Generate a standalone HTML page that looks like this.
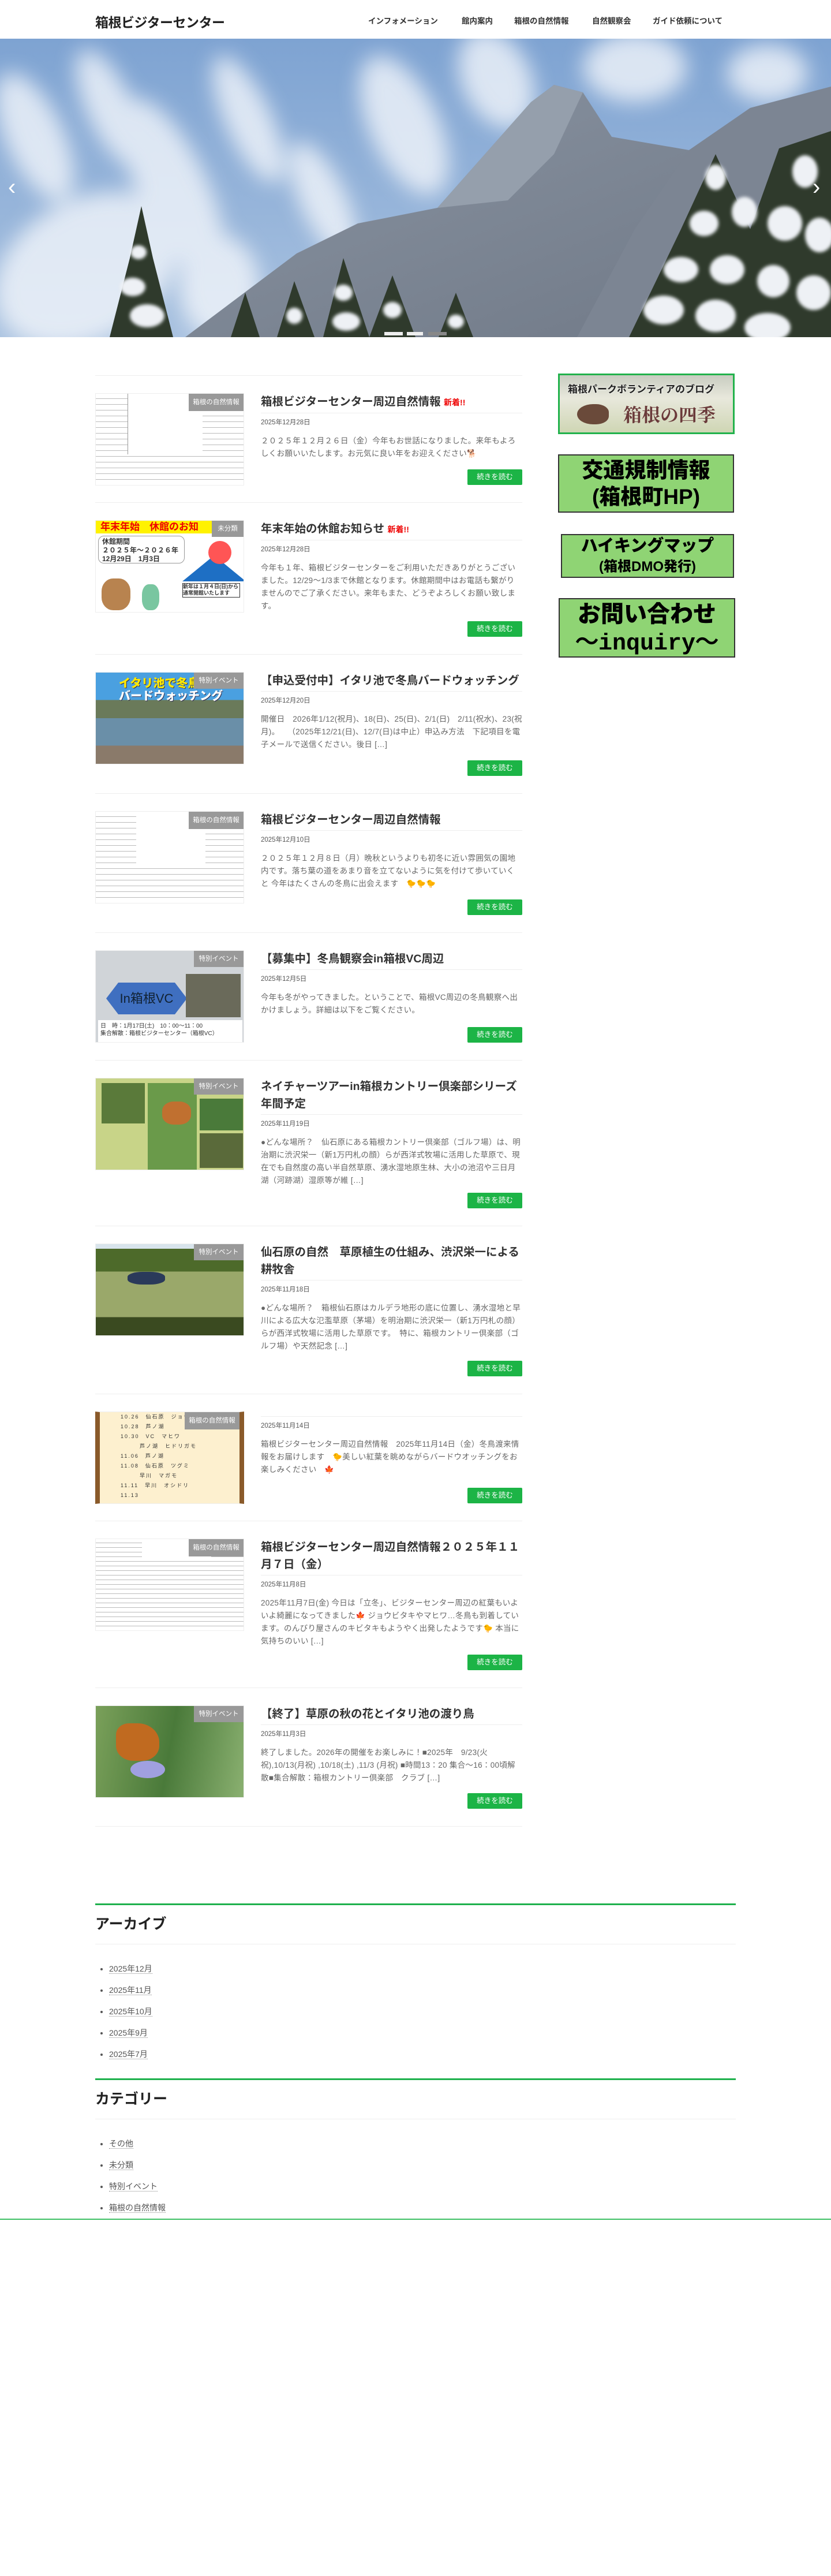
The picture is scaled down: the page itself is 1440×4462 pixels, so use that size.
<!DOCTYPE html>
<html lang="ja"><head><meta charset="utf-8">
<style>
*{box-sizing:border-box;margin:0;padding:0}
body{width:1440px;height:4462px;background:#fff;font-family:"Liberation Sans","Noto Sans CJK JP",sans-serif;color:#333;position:relative;overflow:hidden}
.hdr{position:absolute;left:0;top:0;width:1440px;height:67px;background:#fff}
.logo{position:absolute;left:165px;top:20px;font-size:23px;font-weight:bold;color:#222;letter-spacing:-0.5px}
.nav{position:absolute;top:25px;font-size:13.5px;font-weight:bold;color:#333;white-space:nowrap}
.hero{position:absolute;left:0;top:67px;width:1440px;height:517px;overflow:hidden}
.main{position:absolute;left:165px;top:650px;width:740px}
.post{position:relative;border-top:1px solid #eee;padding-top:30px}
.thumb{position:absolute;left:0;top:30px;width:258px;height:160px;overflow:hidden;border:1px solid #eee}
.lbl{position:absolute;right:0;top:0;width:86px;height:28px;background:#999;color:#fff;font-size:11.5px;line-height:28px;text-align:center}
.txt{margin-left:287px}
.tt{font-size:19.5px;font-weight:bold;line-height:30px;padding-bottom:3px;border-bottom:1px solid #eee;color:#333}
.tt .new{color:#e00;font-size:14px}
.dt{font-size:11.5px;color:#555;line-height:16px;margin-top:8px}
.ex{font-size:13.5px;line-height:22px;color:#666;margin-top:13px;letter-spacing:0.3px}
.btn{position:absolute;right:0;bottom:30px;width:95px;height:27px;background:#1cb446;color:#fff;font-size:12.5px;line-height:27px;text-align:center;border-radius:2px}
.side a{position:absolute;display:block}
.bn{background:#8fd474;border:2px solid #333;color:#000;font-weight:900;text-align:center}
.foot{position:absolute;left:165px;width:1110px}
.wg{border-top:3px solid #1fb14c;}
.wg h2{font-size:25px;font-weight:bold;color:#222;height:68px;line-height:66px;border-bottom:1px solid #eee}
.wg ul{list-style:disc;padding-left:24px;padding-top:24px;color:#333}
.wg li{font-size:14px;line-height:37px;color:#555}
.wg li span{border-bottom:1px dotted #888}
</style></head><body>
<div class="hdr">
<div class="logo">箱根ビジターセンター</div>
<div class="nav" style="left:638px">インフォメーション</div>
<div class="nav" style="left:800px">館内案内</div>
<div class="nav" style="left:891px">箱根の自然情報</div>
<div class="nav" style="left:1026px">自然観察会</div>
<div class="nav" style="left:1131px">ガイド依頼について</div>
</div>

<div class="hero">
<svg width="1440" height="517" viewBox="0 0 1440 517">
<defs>
<linearGradient id="sky" x1="0" y1="0" x2="0" y2="1"><stop offset="0" stop-color="#7ea3d2"/><stop offset="1" stop-color="#a9c2e0"/></linearGradient>
<filter id="bl"><feGaussianBlur stdDeviation="18"/></filter>
<filter id="bl2"><feGaussianBlur stdDeviation="3"/></filter>
<linearGradient id="mt" x1="0" y1="0" x2="1" y2="1"><stop offset="0" stop-color="#8a94a2"/><stop offset="1" stop-color="#6f7886"/></linearGradient>
</defs>
<rect width="1440" height="517" fill="url(#sky)"/>
<g filter="url(#bl)" fill="#f2f5fa" opacity="0.8">
<ellipse cx="150" cy="400" rx="170" ry="120" transform="rotate(-30 150 400)"/>
<ellipse cx="300" cy="260" rx="60" ry="170" transform="rotate(-25 300 260)"/>
<ellipse cx="60" cy="170" rx="50" ry="120" transform="rotate(-25 60 170)"/>
<ellipse cx="190" cy="120" rx="40" ry="110" transform="rotate(-25 190 120)"/>
<ellipse cx="430" cy="140" rx="40" ry="120" transform="rotate(-25 430 140)"/>
<ellipse cx="700" cy="150" rx="60" ry="130" transform="rotate(-25 700 150)"/>
<ellipse cx="860" cy="70" rx="60" ry="90" transform="rotate(-25 860 70)"/>
<ellipse cx="1100" cy="50" rx="90" ry="60"/>
<ellipse cx="1330" cy="60" rx="70" ry="50"/>
<ellipse cx="560" cy="280" rx="40" ry="110" transform="rotate(-25 560 280)"/>
<ellipse cx="380" cy="430" rx="70" ry="90"/>
</g>
<polygon points="321,517 514,372 620,320 758,293 920,110 960,80 1010,93 1060,170 1194,193 1300,120 1440,83 1440,517" fill="url(#mt)"/>
<polygon points="1194,193 1300,120 1440,83 1440,517 1000,517 1100,330" fill="#7c8593"/>
<polygon points="758,293 920,110 960,80 1010,93 960,200 880,280" fill="#959fac"/>
<g fill="#2f3a2c">
<polygon points="1090,517 1180,330 1240,200 1300,330 1350,190 1440,160 1440,517"/>
<polygon points="190,517 225,380 245,290 265,380 300,517"/>
<polygon points="400,517 425,440 450,517"/>
<polygon points="480,517 510,420 545,517"/>
<polygon points="560,517 595,380 640,517"/>
<polygon points="640,517 680,410 720,517"/>
<polygon points="760,517 790,440 820,517"/>
</g>
<g fill="#eef1f5" filter="url(#bl2)">
<ellipse cx="1240" cy="240" rx="18" ry="22"/><ellipse cx="1395" cy="230" rx="22" ry="28"/><ellipse cx="1220" cy="320" rx="25" ry="22"/><ellipse cx="1290" cy="300" rx="22" ry="26"/>
<ellipse cx="1360" cy="320" rx="30" ry="30"/><ellipse cx="1420" cy="340" rx="25" ry="30"/><ellipse cx="1180" cy="400" rx="30" ry="22"/><ellipse cx="1260" cy="400" rx="30" ry="25"/>
<ellipse cx="1340" cy="420" rx="28" ry="28"/><ellipse cx="1410" cy="440" rx="30" ry="30"/><ellipse cx="1150" cy="470" rx="35" ry="25"/><ellipse cx="1240" cy="480" rx="35" ry="28"/><ellipse cx="1330" cy="500" rx="40" ry="25"/>
<ellipse cx="240" cy="370" rx="14" ry="12"/><ellipse cx="230" cy="430" rx="22" ry="16"/><ellipse cx="255" cy="480" rx="30" ry="20"/>
<ellipse cx="595" cy="440" rx="16" ry="14"/><ellipse cx="600" cy="490" rx="24" ry="16"/><ellipse cx="680" cy="470" rx="16" ry="14"/><ellipse cx="510" cy="480" rx="14" ry="14"/><ellipse cx="790" cy="490" rx="14" ry="12"/>
</g>
<text x="14" y="270" font-size="40" fill="#fff" font-family="Liberation Sans">‹</text>
<text x="1408" y="270" font-size="40" fill="#fff" font-family="Liberation Sans">›</text>
<rect x="666" y="508" width="32" height="6" fill="#eee"/><rect x="705" y="508" width="28" height="6" fill="#eee"/><rect x="742" y="508" width="32" height="6" fill="#888"/>
</svg>
</div>

<div class="main">
<div class="post" style="height:220px">
 <div class="thumb" style="background:repeating-linear-gradient(0deg,#fff 0 9px,#bbb 9px 10px)"><div style="position:absolute;left:55px;top:0;width:130px;height:105px;background:#fff;border-left:1px solid #999"></div><div class="lbl" style="width:95px;height:30px;line-height:30px">箱根の自然情報</div></div>
 <div class="txt"><div class="tt">箱根ビジターセンター周辺自然情報 <span class="new">新着!!</span></div><div class="dt">2025年12月28日</div><div class="ex">２０２５年１２月２６日（金）今年もお世話になりました。来年もよろしくお願いいたします。お元気に良い年をお迎えください🐕</div></div>
 <div class="btn">続きを読む</div>
</div>
<div class="post" style="height:263px">
 <div class="thumb" style="background:#fff"><div style="height:22px;background:#fff200;color:#e00;font-weight:bold;font-size:17px;line-height:22px;padding-left:8px">年末年始　休館のお知</div><div style="position:absolute;left:4px;top:26px;width:150px;height:48px;border:1px solid #999;border-radius:10px;font-size:12px;font-weight:bold;line-height:15px;padding:2px 6px">休館期間<br>２０２５年〜２０２６年<br>12月29日　1月3日</div><div style="position:absolute;left:150px;top:60px;width:0;height:0;border-left:55px solid transparent;border-right:55px solid transparent;border-bottom:45px solid #1e6fc4"></div><div style="position:absolute;left:195px;top:35px;width:40px;height:40px;border-radius:50%;background:#f55"></div><div style="position:absolute;left:10px;top:100px;width:50px;height:55px;border-radius:40%;background:#b8834f"></div><div style="position:absolute;left:80px;top:110px;width:30px;height:45px;border-radius:40%;background:#79c6a0"></div><div style="position:absolute;left:150px;top:108px;width:100px;height:25px;border:1px solid #333;font-size:9px;font-weight:bold;line-height:11px;background:#fff">新年は１月４日(日)から通常開館いたします</div><div class="lbl" style="width:55px">未分類</div></div>
 <div class="txt"><div class="tt">年末年始の休館お知らせ <span class="new">新着!!</span></div><div class="dt">2025年12月28日</div><div class="ex">今年も１年、箱根ビジターセンターをご利用いただきありがとうございました。12/29〜1/3まで休館となります。休館期間中はお電話も繋がりませんのでご了承ください。来年もまた、どうぞよろしくお願い致します。</div></div>
 <div class="btn">続きを読む</div>
</div>
<div class="post" style="height:241px">
 <div class="thumb" style="background:linear-gradient(#4aa0e0 0 30%,#6a7a5a 30% 50%,#6a8fa8 50% 80%,#8a7a6a 80%)"><div style="position:absolute;left:40px;top:8px;color:#ffe800;font-weight:900;font-size:20px;line-height:22px;text-shadow:1px 1px 0 #335">イタリ池で冬鳥<br><span style="color:#fff">バードウォッチング</span></div><div class="lbl">特別イベント</div></div>
 <div class="txt"><div class="tt">【申込受付中】イタリ池で冬鳥バードウォッチング</div><div class="dt">2025年12月20日</div><div class="ex">開催日　2026年1/12(祝月)、18(日)、25(日)、2/1(日)　2/11(祝水)、23(祝月)。　　（2025年12/21(日)、12/7(日)は中止）申込み方法　下記項目を電子メールで送信ください。後日 [&hellip;]</div></div>
 <div class="btn">続きを読む</div>
</div>
<div class="post" style="height:241px">
 <div class="thumb" style="background:repeating-linear-gradient(0deg,#fff 0 9px,#bbb 9px 10px)"><div style="position:absolute;left:70px;top:0;width:120px;height:95px;background:#fff"></div><div class="lbl" style="width:95px;height:30px;line-height:30px">箱根の自然情報</div></div>
 <div class="txt"><div class="tt">箱根ビジターセンター周辺自然情報</div><div class="dt">2025年12月10日</div><div class="ex">２０２５年１２月８日（月）晩秋というよりも初冬に近い雰囲気の園地内です。落ち葉の道をあまり音を立てないように気を付けて歩いていくと 今年はたくさんの冬鳥に出会えます　🐤🐤🐤</div></div>
 <div class="btn">続きを読む</div>
</div>
<div class="post" style="height:221px">
 <div class="thumb" style="background:#d0d4d8"><div style="position:absolute;left:18px;top:55px;width:140px;height:55px;background:#3f6fc0;clip-path:polygon(15% 0,85% 0,100% 50%,85% 100%,15% 100%,0 50%);color:#123;font-size:22px;line-height:55px;text-align:center">In箱根VC</div><div style="position:absolute;left:156px;top:40px;width:95px;height:75px;background:#6a6a5a"></div><div style="position:absolute;left:4px;top:120px;width:250px;height:40px;background:#fff;font-size:10px;line-height:13px;padding:4px">日　時：1月17日(土)　10：00〜11：00<br>集合解散：箱根ビジターセンター（箱根VC）</div><div class="lbl">特別イベント</div></div>
 <div class="txt"><div class="tt">【募集中】冬鳥観察会in箱根VC周辺</div><div class="dt">2025年12月5日</div><div class="ex">今年も冬がやってきました。ということで、箱根VC周辺の冬鳥観察へ出かけましょう。詳細は以下をご覧ください。</div></div>
 <div class="btn">続きを読む</div>
</div>
<div class="post" style="height:287px">
 <div class="thumb" style="background:#c8d488"><div style="position:absolute;left:10px;top:8px;width:75px;height:70px;background:#5a7a3a"></div><div style="position:absolute;left:90px;top:8px;width:85px;height:150px;background:#6a9a4a"></div><div style="position:absolute;left:180px;top:35px;width:75px;height:55px;background:#4a7a3a"></div><div style="position:absolute;left:180px;top:95px;width:75px;height:60px;background:#5a6a3a"></div><div style="position:absolute;left:115px;top:40px;width:50px;height:40px;background:#c07030;border-radius:40%"></div><div class="lbl">特別イベント</div></div>
 <div class="txt"><div class="tt">ネイチャーツアーin箱根カントリー倶楽部シリーズ　年間予定</div><div class="dt">2025年11月19日</div><div class="ex">●どんな場所？　仙石原にある箱根カントリー倶楽部（ゴルフ場）は、明治期に渋沢栄一（新1万円札の顔）らが西洋式牧場に活用した草原で、現在でも自然度の高い半自然草原、湧水湿地原生林、大小の池沼や三日月湖（河跡湖）湿原等が維 [&hellip;]</div></div>
 <div class="btn">続きを読む</div>
</div>
<div class="post" style="height:291px">
 <div class="thumb" style="background:linear-gradient(#d8e4ec 0 5%,#4d6a2a 5% 30%,#9aa86a 30% 80%,#3a4a20 80%)"><div style="position:absolute;left:55px;top:48px;width:65px;height:22px;background:#2a3a5a;border-radius:40%"></div><div class="lbl">特別イベント</div></div>
 <div class="txt"><div class="tt">仙石原の自然　草原植生の仕組み、渋沢栄一による耕牧舎</div><div class="dt">2025年11月18日</div><div class="ex">●どんな場所？　箱根仙石原はカルデラ地形の底に位置し、湧水湿地と早川による広大な氾濫草原（茅場）を明治期に渋沢栄一（新1万円札の顔）らが西洋式牧場に活用した草原です。　特に、箱根カントリー倶楽部（ゴルフ場）や天然記念 [&hellip;]</div></div>
 <div class="btn">続きを読む</div>
</div>
<div class="post" style="height:220px">
 <div class="thumb" style="background:#fdf0cf;border-left:8px solid #8a5a2a;border-right:8px solid #8a5a2a;font-size:9px;line-height:17px;padding-left:36px;letter-spacing:2px">10.26　仙石原　ジョウビタキ<br>10.28　芦ノ湖<br>10.30　VC　マヒワ<br>　　　芦ノ湖　ヒドリガモ<br>11.06　芦ノ湖<br>11.08　仙石原　ツグミ<br>　　　早川　マガモ<br>11.11　早川　オシドリ<br>11.13<div class="lbl" style="width:95px;height:30px;line-height:30px;letter-spacing:0">箱根の自然情報</div></div>
 <div class="txt"><div class="tt" style="height:9px;padding:0"></div><div class="dt">2025年11月14日</div><div class="ex">箱根ビジターセンター周辺自然情報　2025年11月14日（金）冬鳥渡来情報をお届けします　🐤美しい紅葉を眺めながらバードウオッチングをお楽しみください　🍁</div></div>
 <div class="btn">続きを読む</div>
</div>
<div class="post" style="height:289px">
 <div class="thumb" style="background:repeating-linear-gradient(0deg,#fff 0 7px,#bbb 7px 8px)"><div style="position:absolute;left:80px;top:0;width:120px;height:35px;background:#fff"></div><div class="lbl" style="width:95px;height:30px;line-height:30px">箱根の自然情報</div></div>
 <div class="txt"><div class="tt">箱根ビジターセンター周辺自然情報２０２５年１１月７日（金）</div><div class="dt">2025年11月8日</div><div class="ex">2025年11月7日(金) 今日は「立冬」、ビジターセンター周辺の紅葉もいよいよ綺麗になってきました🍁 ジョウビタキやマヒワ…冬鳥も到着しています。のんびり屋さんのキビタキもようやく出発したようです🐤 本当に気持ちのいい [&hellip;]</div></div>
 <div class="btn">続きを読む</div>
</div>
<div class="post" style="height:241px;border-bottom:1px solid #eee">
 <div class="thumb" style="background:linear-gradient(100deg,#7aa05a,#4a7a3a 50%,#8ab070)"><div style="position:absolute;left:35px;top:30px;width:75px;height:65px;background:#c06a20;border-radius:30% 50% 40% 40%"></div><div style="position:absolute;left:60px;top:95px;width:60px;height:30px;background:#a0a0e0;border-radius:50%"></div><div class="lbl">特別イベント</div></div>
 <div class="txt"><div class="tt">【終了】草原の秋の花とイタリ池の渡り鳥</div><div class="dt">2025年11月3日</div><div class="ex">終了しました。2026年の開催をお楽しみに！■2025年　9/23(火祝),10/13(月祝) ,10/18(土) ,11/3 (月祝) ■時間13：20 集合〜16：00頃解散■集合解散：箱根カントリー倶楽部　クラブ [&hellip;]</div></div>
 <div class="btn">続きを読む</div>
</div>
</div>

<div class="side">
<a style="left:967px;top:647px;width:306px;height:105px;border:3px solid #22b24c;background:linear-gradient(#c8ccc0,#e8e8dc 40%,#cfd6b4);">
 <div style="position:absolute;left:14px;top:10px;font-size:17px;font-weight:bold;color:#222;white-space:nowrap;text-shadow:0 0 3px #fff">箱根パークボランティアのブログ</div>
 <div style="position:absolute;left:30px;top:50px;width:55px;height:35px;background:#6a4a3a;border-radius:50% 40% 40% 50%"></div>
 <div style="position:absolute;left:110px;top:44px;font-size:32px;font-weight:bold;color:#6a3a3a;font-family:'Noto Serif CJK SC',serif">箱根の四季</div>
</a>
<a class="bn" style="left:967px;top:787px;width:305px;height:101px;font-size:37px;line-height:46px;padding-top:3px">交通規制情報<br>(箱根町HP)</a>
<a class="bn" style="left:972px;top:925px;width:300px;height:76px;font-size:29px;line-height:34px;padding-top:2px">ハイキングマップ<br><span style="font-size:24px">(箱根DMO発行)</span></a>
<a class="bn" style="left:968px;top:1036px;width:306px;height:103px;font-size:40px;line-height:48px;padding-top:2px">お問い合わせ<br><span style="font-family:'Liberation Mono',monospace">〜inquiry〜</span></a>
</div>

<div class="foot" style="top:3297px">
<div class="wg"><h2>アーカイブ</h2><ul><li><span>2025年12月</span></li><li><span>2025年11月</span></li><li><span>2025年10月</span></li><li><span>2025年9月</span></li><li><span>2025年7月</span></li></ul></div>
</div>
<div class="foot" style="top:3600px">
<div class="wg"><h2>カテゴリー</h2><ul><li><span>その他</span></li><li><span>未分類</span></li><li><span>特別イベント</span></li><li><span>箱根の自然情報</span></li></ul></div>
</div>
<div style="position:absolute;left:0;top:3843px;width:1440px;height:2px;background:#3cbf63"></div>
</body></html>
